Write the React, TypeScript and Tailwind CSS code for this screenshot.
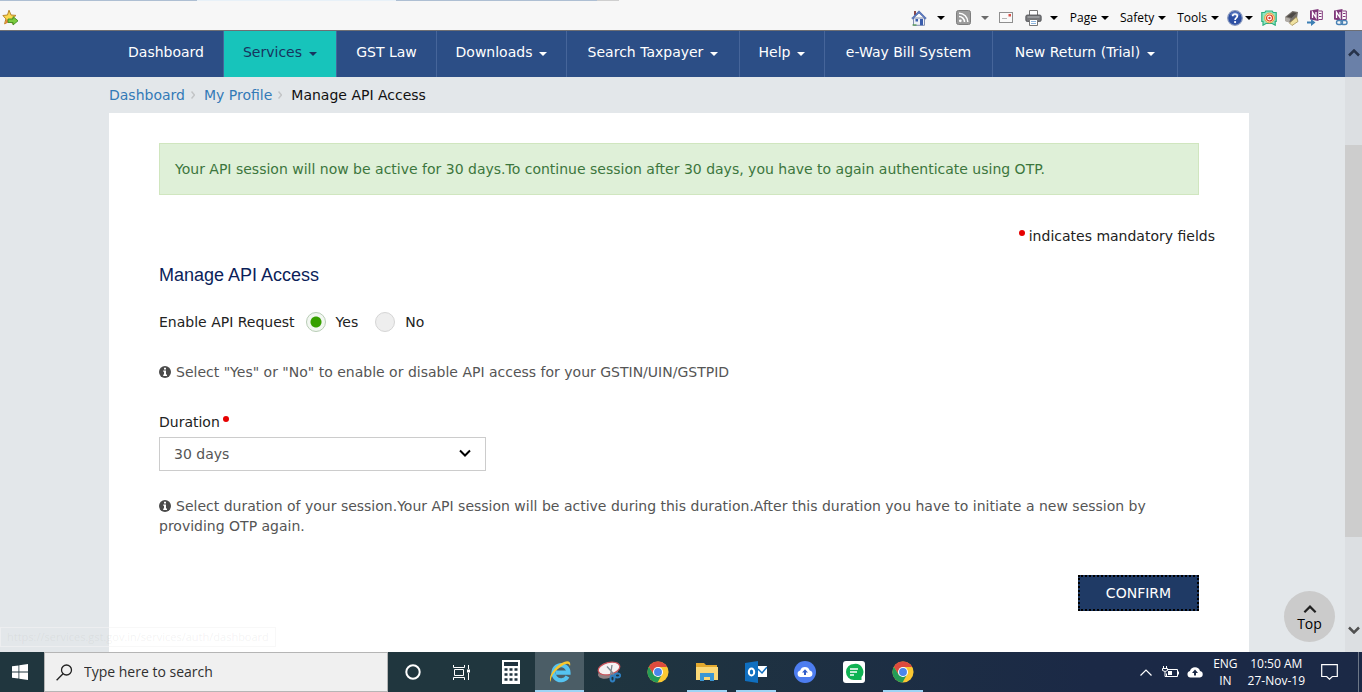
import React from "react";

const Caret = ({ className = "" }: { className?: string }) => (
  <svg viewBox="0 0 8 4" className={`h-1 w-2 shrink-0 fill-current ${className}`} aria-hidden="true">
    <path d="M0 0h8L4 4z" />
  </svg>
);

const StarIcon = () => (
  <svg viewBox="0 0 18 18" className="h-[18px] w-[18px]" aria-hidden="true">
    <path d="M7 1.2 9 6l5 .4-3.8 3.4 1.2 5L7 12.2l-4.4 2.7 1.3-5L.9 6.500 5.500 6z" fill="#fcd94e" stroke="#b8862b" strokeWidth="1" />
    <path d="M3 15.200 4.600 10 7 12.300z" fill="#e8823a" />
    <path d="M6 10h5V7.600l5 4.200-5 4.200v-2.500H6z" fill="#7ccb3f" stroke="#3f8d22" strokeWidth=".9" />
  </svg>
);

const HomeIcon = () => (
  <svg viewBox="0 0 16 16" className="h-4 w-4" aria-hidden="true">
    <path d="M3 1h2v4H3z" fill="#8d4a4a" />
    <path d="M2.500 8h11v7.300h-11z" fill="#eef1f8" stroke="#6476a0" strokeWidth=".8" />
    <path d="M8 .8.700 8.200l1 .8L8 3l6.300 6 1-.8z" fill="#5c7cc4" stroke="#3b559a" strokeWidth=".6" />
    <path d="M4.500 9h2.500v2.500H4.500zM9 9h3v6.300H9z" fill="#3a5dad" />
    <path d="M1.500 15h4" stroke="#4f9a4a" strokeWidth="1.200" />
  </svg>
);

const RssIcon = () => (
  <svg viewBox="0 0 15 15" className="h-[15px] w-[15px]" aria-hidden="true">
    <rect x=".5" y=".5" width="14" height="14" rx="2" fill="#9b9b9b" stroke="#7e7e7e" />
    <circle cx="4.300" cy="10.800" r="1.400" fill="#fff" />
    <path d="M3 6.500a5.500 5.500 0 0 1 5.500 5.500M3 3.200a8.800 8.800 0 0 1 8.800 8.800" fill="none" stroke="#fff" strokeWidth="1.500" />
  </svg>
);

const MailIcon = () => (
  <svg viewBox="0 0 14 11" className="h-[11px] w-[14px]" aria-hidden="true">
    <rect x=".5" y=".5" width="13" height="10" fill="#fafafa" stroke="#8f8f8f" />
    <path d="M9.500 2h2.500v2.500H9.500z" fill="#d9534a" />
    <path d="M3 6.500h5" stroke="#b5b5b5" />
  </svg>
);

const PrinterIcon = () => (
  <svg viewBox="0 0 17 16" className="h-4 w-[17px]" aria-hidden="true">
    <path d="M4.500.500h8V6h-8z" fill="#fff" stroke="#777" />
    <rect x=".8" y="5" width="15.400" height="6.500" rx="1.500" fill="#77787b" stroke="#4b4c50" strokeWidth=".8" />
    <path d="M2.500 7h12" stroke="#b9babd" />
    <path d="M4.500 9.500h8v6h-8z" fill="#fff" stroke="#777" />
    <path d="M6 11.500h5M6 13.500h5" stroke="#8cb4dd" />
  </svg>
);

const HelpIcon = () => (
  <svg viewBox="0 0 16 16" className="h-4 w-4" aria-hidden="true">
    <circle cx="8" cy="8" r="7.300" fill="#2c4fa3" stroke="#8a9abf" strokeWidth="1.200" />
    <path d="M3 5a5.600 5.600 0 0 1 10 0q-5 2.500-10 0z" fill="#7f9bd8" opacity=".6" />
    <path d="M5.700 6.300c0-3 4.700-3 4.700-.2C10.400 8 8.100 7.900 8.100 10" fill="none" stroke="#fff" strokeWidth="1.700" />
    <circle cx="8.100" cy="12.100" r="1.100" fill="#fff" />
  </svg>
);

const TargetIcon = () => (
  <svg viewBox="0 0 16 16" className="h-4 w-4" aria-hidden="true">
    <path d="M.8 2.500h3l1-1.500h6.400l1 1.500h3v9h-1v3.700l-3-1.700H5l-3 1.700v-3.700H.8z" fill="#8fe6c2" stroke="#2fb07f" strokeWidth="1.200" />
    <circle cx="8.500" cy="8" r="4.900" fill="#fbe9a4" stroke="#ee9a48" strokeWidth="1" />
    <circle cx="8.500" cy="8" r="3" fill="#fff" stroke="#dd3e31" strokeWidth="1.200" />
    <circle cx="8.500" cy="8" r="1.200" fill="#dd3e31" />
  </svg>
);

const ScannerIcon = () => (
  <svg viewBox="0 0 16 16" className="h-4 w-4" aria-hidden="true">
    <path d="M1 7 8.500 1l5.500 1L13 8l-5 5.500L1.500 11z" fill="#77726c" />
    <path d="M3 6.500 9 2.300l3.500.700L7.500 8z" fill="#4d4945" />
    <path d="m5.500 13 7-6 1.500 4.500L8 15.500z" fill="#f0e2a2" stroke="#9b8849" strokeWidth=".7" />
    <path d="m1 7 5.500 1.800L5 12.500 1 11z" fill="#b1aca6" />
  </svg>
);

const NoteIcon = ({ linked = false }: { linked?: boolean }) => (
  <svg viewBox="0 0 17 17" className="h-[17px] w-[17px]" aria-hidden="true">
    <path d="M3 1.500 11.500 0v12L3 10.500z" fill="#80397b" />
    <path d="M11.500 2h3.800v8.500h-3.800" fill="#fff" stroke="#80397b" />
    <path d="M12 4.500h2.500M12 7.500h2.500" stroke="#80397b" />
    <path d="M5.500 9V3.200L9 8.500V3" fill="none" stroke="#fff" strokeWidth="1.300" />
    {linked ? (
      <g fill="none" stroke="#4b83b5" strokeWidth="1.400">
        <rect x="5.500" y="11.500" width="6" height="4" rx="2" />
        <rect x="10" y="11.500" width="6" height="4" rx="2" />
      </g>
    ) : (
      <path d="M0 12.500h4V10l4.500 3.500L4 17v-2.500H0z" fill="#3d7fb4" />
    )}
  </svg>
);

const tools = ["Page", "Safety", "Tools"];

const Toolbar = () => (
  <header className="border-b border-[#6f6f73] bg-[#f7f7f7] font-['Open_Sans',sans-serif] text-xs text-black">
    <div className="flex h-px">
      <div className="w-[197px] bg-[#aebfd3]" />
      <div className="w-[199px] bg-[#e8f1f8]" />
      <div className="w-[201px] bg-[#aebfd3]" />
      <div className="w-[22px] bg-[#cfcfcf]" />
      <div className="flex-1 bg-[#f7f7f7]" />
    </div>
    <div className="flex h-[29px] items-center pt-1 pr-3.5 pl-0.5">
      <button type="button" aria-label="Add to favorites"><StarIcon /></button>
      <div className="ml-auto flex items-center">
        <button type="button" aria-label="Home" className="flex items-center gap-2.5"><HomeIcon /><Caret /></button>
        <button type="button" aria-label="Feeds" className="ml-[11px] flex items-center gap-2.5 text-[#6b6b6b]"><RssIcon /><Caret /></button>
        <button type="button" aria-label="Read mail" className="ml-2.5"><MailIcon /></button>
        <button type="button" aria-label="Print" className="ml-3 flex items-center gap-2"><PrinterIcon /><Caret /></button>
        <div className="ml-3 flex gap-[11px]">
          {tools.map((t) => (
            <button key={t} type="button" className="flex items-center gap-1">{t}<Caret /></button>
          ))}
        </div>
        <button type="button" aria-label="Help" className="ml-2 flex items-center gap-0.5"><HelpIcon /><Caret /></button>
        <div className="ml-2 flex items-center gap-[7px]">
          <button type="button" aria-label="Network"><TargetIcon /></button>
          <button type="button" aria-label="Scanner"><ScannerIcon /></button>
          <button type="button" aria-label="Send to notes"><NoteIcon /></button>
          <button type="button" aria-label="Linked notes"><NoteIcon linked /></button>
        </div>
      </div>
    </div>
  </header>
);

const navItems = [
  { label: "Dashboard" },
  { label: "Services", menu: true, active: true },
  { label: "GST Law" },
  { label: "Downloads", menu: true },
  { label: "Search Taxpayer", menu: true },
  { label: "Help", menu: true },
  { label: "e-Way Bill System" },
  { label: "New Return (Trial)", menu: true },
];

const Nav = () => (
  <nav className="bg-[#2c4e86] pr-1">
    <ul className="mx-auto grid max-w-[1140px] grid-cols-[115px_113px_100px_130px_173px_85px_168px_185px]">
      {navItems.map((n) => (
        <li key={n.label} className="border-r border-[#46659a]">
          <a
            href="#"
            className={`flex h-[46px] items-center justify-center pb-1 whitespace-nowrap ${n.active ? "bg-[#17c4bb] text-[#17345f]" : "text-white"}`}
          >
            {n.label}
            {n.menu && <Caret className="mt-1 ml-[7px]" />}
          </a>
        </li>
      ))}
    </ul>
  </nav>
);

const Required = () => <span className="mt-1 block h-1.5 w-1.5 shrink-0 rounded-full bg-[#e60000]" aria-hidden="true" />;

const InfoIcon = () => (
  <svg viewBox="0 0 12 12" className="mr-[5px] mb-0.5 inline h-3 w-3" aria-hidden="true">
    <circle cx="6" cy="6" r="6" fill="#4a4a4a" />
    <path d="M5 1.800h2v1.700H5zM4.200 4.600H7v4h1v1.300H4.200V8.600H5V5.800h-.8z" fill="#fff" />
  </svg>
);

const Chevron = ({ className, width = 2 }: { className: string; width?: number }) => (
  <svg viewBox="0 0 12 8" className={className} fill="none" stroke="currentColor" strokeWidth={width} aria-hidden="true">
    <path d="m1 1.500 5 5 5-5" />
  </svg>
);

const Separator = () => (
  <svg viewBox="0 0 4 8" className="mr-[9px] ml-1.5 h-2 w-1" fill="none" stroke="#c2c4c6" strokeWidth="1.500" aria-hidden="true">
    <path d="m.5.5 3 3.500-3 3.500" />
  </svg>
);

const radioClass =
  "h-5 w-5 appearance-none rounded-full border border-[#d5d5d5] bg-[#eeeeee] checked:border-[#b9cdb6] checked:bg-[radial-gradient(circle,#37a000_5px,#f2f7f1_6px)]";

const Main = () => (
  <main className="pr-1">
    <div className="mx-auto max-w-[1140px]">
      <ol className="flex h-9 items-center text-[#337ab7]">
        <li className="flex items-center"><a href="#">Dashboard</a><Separator /></li>
        <li className="flex items-center"><a href="#">My Profile</a><Separator /></li>
        <li className="text-[#111]">Manage API Access</li>
      </ol>
    </div>
    <form className="mx-auto min-h-[539px] max-w-[1140px] bg-white px-[50px] pt-[30px]" onSubmit={(e) => e.preventDefault()}>
      <p className="border border-[#d0e6bf] bg-[#dff0d8] px-[15px] py-[15px] text-[#3c763d]" role="status">
        Your API session will now be active for 30 days.To continue session after 30 days, you have to again authenticate using OTP.
      </p>
      <p className="-mr-4 mt-[31px] flex justify-end gap-1 text-[#222]"><Required />indicates mandatory fields</p>
      <h1 className="mt-[17px] font-['Liberation_Sans',sans-serif] text-lg leading-6 text-[#0b1e59]">Manage API Access</h1>
      <fieldset className="mt-[25px] flex items-center text-[#222]">
        <legend className="float-left mr-[11px]">Enable API Request</legend>
        <label className="flex items-center gap-2.5"><input type="radio" name="api" className={radioClass} defaultChecked />Yes</label>
        <label className="ml-[17px] flex items-center gap-2.5"><input type="radio" name="api" className={radioClass} />No</label>
      </fieldset>
      <p className="mt-[30px] text-[#555]"><InfoIcon />Select "Yes" or "No" to enable or disable API access for your GSTIN/UIN/GSTPID</p>
      <label htmlFor="duration" className="mt-[30px] flex gap-[3px] text-[#222]">Duration<Required /></label>
      <div className="relative mt-[5px] w-[327px] max-w-full">
        <select id="duration" className="h-[34px] w-full appearance-none border border-[#ccc] bg-white px-3.5 text-[#555]">
          <option>30 days</option>
        </select>
        <Chevron className="pointer-events-none absolute top-3 right-[15px] h-2 w-3 text-black" />
      </div>
      <p className="mt-[25px] text-[#555]">
        <InfoIcon />Select duration of your session.Your API session will be active during this duration.After this duration you have to initiate a new session by providing OTP again.
      </p>
      <div className="mt-[39px] flex justify-end">
        <button type="submit" className="h-9 w-[121px] border-2 border-dotted border-black bg-[#1f3a65] text-white">CONFIRM</button>
      </div>
    </form>
  </main>
);

const Scrollbar = () => (
  <div className="absolute inset-y-0 right-0 flex w-[17px] flex-col bg-[#dcdfe2]" aria-hidden="true">
    <div className="flex h-[46px] items-center justify-center bg-[#6a80a8]"><Chevron className="mb-0.5 h-2 w-3 rotate-180 text-[#26324a]" width={2.500} /></div>
    <div className="mt-[68px] flex-[392] bg-[#cdcdcd]" />
    <div className="flex flex-[115] items-end justify-center"><Chevron className="mb-[18px] h-2 w-3 text-[#505050]" width={2.500} /></div>
  </div>
);

const ChromeIcon = () => (
  <svg viewBox="0 0 24 24" className="h-[22px] w-[22px]" aria-hidden="true">
    <circle cx="12" cy="12" r="11.500" fill="#fbc832" />
    <path d="M2 6.300A11.500 11.500 0 0 1 22 6.500H12L7.200 14.700z" fill="#dd4b3e" />
    <path d="M2 6.300A11.500 11.500 0 0 0 11.500 23.500l4.800-8.800L12 17l-4.800-2.300z" fill="#249c57" />
    <circle cx="12" cy="12" r="5.500" fill="#fff" />
    <circle cx="12" cy="12" r="4.300" fill="#4a86ea" />
  </svg>
);

const CortanaIcon = () => (
  <svg viewBox="0 0 16 16" className="h-4 w-4" aria-hidden="true"><circle cx="8" cy="8" r="6.700" fill="none" stroke="#fff" strokeWidth="2" /></svg>
);

const TaskViewIcon = () => (
  <svg viewBox="0 0 17 17" className="h-[17px] w-[17px]" fill="none" stroke="#fff" aria-hidden="true">
    <path d="M.500 1v2.500h11V1M.500 16v-2.500h11V16M1.500 5.500v6h9v-6zM15.500 1v4M15.500 9v7" />
    <path d="M14 5.500h3v3h-3z" fill="#fff" stroke="none" />
  </svg>
);

const CalculatorIcon = () => (
  <svg viewBox="0 0 18 24" className="h-6 w-[18px]" aria-hidden="true">
    <path d="M0 0h18v24H0z" fill="#fff" />
    <path d="M2 2h14v4H2z" fill="#20333f" />
    <path d="M2.500 9.500h13M2.500 14.500h13M2.500 19.500h13" stroke="#20333f" strokeWidth="2.500" strokeDasharray="3 2" />
  </svg>
);

const IeIcon = () => (
  <svg viewBox="0 0 24 24" className="h-6 w-6" aria-hidden="true">
    <path d="M19.500 16.500a7.500 7.500 0 1 1 1-3.800H8" fill="none" stroke="#55c3f1" strokeWidth="4.200" />
    <path d="M3 22C-1 18 7 5 16 2c5-2 7 0 6 4-1-3-4-3-8 0C7 10 2 17 3 22z" fill="#f8c62e" />
  </svg>
);

const SnippingIcon = () => (
  <svg viewBox="0 0 24 22" className="h-[22px] w-6" aria-hidden="true">
    <ellipse cx="11" cy="11.500" rx="10.500" ry="5.500" fill="#8f8184" transform="rotate(-18 11 11)" />
    <ellipse cx="12" cy="7.500" rx="11" ry="6" fill="#f5f1f2" stroke="#c9525a" strokeWidth="1.200" transform="rotate(-14 12 7.500)" />
    <path d="M10 5.500 18.500 15M15 4l-1.500 10" stroke="#7d8790" strokeWidth="1.300" />
    <g fill="none" stroke="#2f7fc0" strokeWidth="1.900"><ellipse cx="15.500" cy="17.500" rx="2" ry="3" /><ellipse cx="20.500" cy="14.500" rx="2.700" ry="2" /></g>
  </svg>
);

const FolderIcon = () => (
  <svg viewBox="0 0 22 20" className="h-5 w-[22px]" aria-hidden="true">
    <path d="M0 1h8l2 2h11v5H0z" fill="#e3a92f" />
    <path d="M0 5h22v13H0z" fill="#fbd877" />
    <path d="M4 11h14v8h-4v-4H8v4H4z" fill="#3b97d3" />
  </svg>
);

const OutlookIcon = () => (
  <svg viewBox="0 0 22 22" className="h-[22px] w-[22px]" aria-hidden="true">
    <path d="M0 2 13 0v22L0 20z" fill="#0f6fc0" />
    <path d="M13 5h9v11h-9z" fill="#fff" />
    <path d="m13 8 4 4 5-6" fill="none" stroke="#0f6fc0" strokeWidth="1.500" />
    <ellipse cx="6.500" cy="11" rx="2.700" ry="3.500" fill="none" stroke="#fff" strokeWidth="2" />
  </svg>
);

const BackupIcon = () => (
  <svg viewBox="0 0 22 22" className="h-[22px] w-[22px]" aria-hidden="true">
    <circle cx="11" cy="11" r="11" fill="#4d7df0" />
    <path d="M6.500 16a3.300 3.300 0 0 1-.3-6.500 5 5 0 0 1 9.500 0 3.300 3.300 0 0 1 0 6.500z" fill="#fff" />
    <path d="M11 8.200 14 11.500h-2V14h-2v-2.500H8z" fill="#315dc9" />
  </svg>
);

const ChatIcon = () => (
  <svg viewBox="0 0 22 22" className="h-[22px] w-[22px]" aria-hidden="true">
    <rect width="22" height="22" rx="3" fill="#fff" />
    <path d="M11 3a8 8 0 1 0 0 16h7.500v-3A8 8 0 0 0 11 3z" fill="#0fb253" />
    <path d="M7 8h8M7 11h7M7 14h4" stroke="#fff" strokeWidth="1.600" />
  </svg>
);

const apps = [
  { name: "Cortana", icon: <CortanaIcon /> },
  { name: "Task View", icon: <TaskViewIcon /> },
  { name: "Calculator", icon: <CalculatorIcon /> },
  { name: "Internet Explorer", icon: <IeIcon />, open: true, focused: true },
  { name: "Snipping Tool", icon: <SnippingIcon /> },
  { name: "Chrome", icon: <ChromeIcon /> },
  { name: "File Explorer", icon: <FolderIcon />, open: true },
  { name: "Outlook", icon: <OutlookIcon />, open: true },
  { name: "Backup", icon: <BackupIcon /> },
  { name: "Chat", icon: <ChatIcon /> },
  { name: "Chrome profile", icon: <ChromeIcon />, open: true },
];

const Taskbar = () => (
  <footer className="flex h-10 shrink-0 bg-linear-to-r from-[#20363e] from-40% to-[#1b2946] to-80% font-['Open_Sans',sans-serif] text-white">
    <button type="button" aria-label="Start" className="flex w-11 shrink-0 items-center justify-center pr-1">
      <svg viewBox="0 0 16 16" className="h-4 w-4 fill-white" aria-hidden="true">
        <path d="M0 2.300 6.500 1.400v6.200H0zM7.300 1.300 16 0v7.600H7.300zM0 8.400h6.500v6.200L0 13.700zM7.300 8.400H16V16l-8.700-1.300z" />
      </svg>
    </button>
    <label className="flex w-[344px] shrink items-center gap-[11px] border border-[#b5b5b5] bg-[#f0f0f0] pl-[11px]">
      <svg viewBox="0 0 17 17" className="h-[17px] w-[17px] shrink-0" fill="none" stroke="#222" strokeWidth="1.300" aria-hidden="true">
        <circle cx="10.500" cy="6" r="5" /><path d="M7 9.700.600 16.300" />
      </svg>
      <input type="search" aria-label="Search" placeholder="Type here to search" className="w-full min-w-0 bg-transparent text-sm outline-none placeholder:text-[#2f2f2f]" />
    </label>
    <div className="flex">
      {apps.map((a) => (
        <button key={a.name} type="button" aria-label={a.name} className={`flex w-[49px] flex-col items-center ${a.focused ? "bg-[#4b5d66]" : ""}`}>
          <span className="flex flex-1 items-center">{a.icon}</span>
          <span className={`-mt-0.5 h-0.5 ${a.focused ? "w-full" : "w-10"} ${a.open ? "bg-[#9fd4f5]" : ""}`} />
        </button>
      ))}
    </div>
    <div className="ml-auto flex items-center text-xs">
      <svg viewBox="0 0 12 7" className="h-[7px] w-3" fill="none" stroke="#fff" strokeWidth="1.200" aria-hidden="true"><path d="m.5 6.500 5.500-5.500 5.500 5.500" /></svg>
      <svg viewBox="0 0 17 12" className="ml-2.5 h-3 w-[17px]" fill="none" stroke="#fff" aria-hidden="true">
        <path d="M6 3.500h9.500v7H4.500v-3M1.500 0v2.500M4.500 0v2.500M.500 2.500h5v2q-2.500 2-5 0zM3 5.500v5h2M16.500 5.500v3" />
        <path d="M6 5h4v4H6z" fill="#fff" stroke="none" />
      </svg>
      <svg viewBox="0 0 16 12" className="ml-2 h-3 w-4" aria-hidden="true">
        <path d="M3.500 11.500a3.300 3.300 0 0 1-.5-6.500 5.200 5.200 0 0 1 10 0 3.300 3.300 0 0 1 0 6.500z" fill="#fff" />
        <path d="M8 3.500 11 7H9v2.500H7V7H5z" fill="#1b2946" />
      </svg>
      <p className="ml-2.5 text-center leading-[17px]">ENG<br />IN</p>
      <p className="ml-2.5 text-center leading-[17px]">10:50 AM<br />27-Nov-19</p>
      <svg viewBox="0 0 17 16" className="ml-4 h-4 w-[17px]" fill="none" stroke="#fff" strokeWidth="1.200" aria-hidden="true">
        <path d="M.700.700h15.600v11.800h-5L8.500 15.200l-2.800-2.700h-5z" />
      </svg>
      <span className="ml-5 h-10 w-1 border-l border-[#6d7787]" />
    </div>
  </footer>
);

export default function App() {
  return (
    <div className="flex min-h-screen flex-col bg-[#e3e7ea] font-['DejaVu_Sans',sans-serif] text-sm leading-5">
      <Toolbar />
      <div className="relative flex-1">
        <Nav />
        <Main />
        <Scrollbar />
        <a href="#" className="absolute right-[27px] bottom-2.5 flex h-[51px] w-[51px] flex-col items-center rounded-full bg-[#cbcbcb] pt-3.5 font-['Open_Sans',sans-serif] text-black">
          <Chevron className="h-[9px] w-4 shrink-0 rotate-180 text-[#222]" />Top
        </a>
        <div className="absolute bottom-[5px] left-0 border border-[#f3f3f3]/60 px-1.5 font-['Open_Sans',sans-serif] text-[11px] leading-[18px] text-[#888]/10">
          https://services.gst.gov.in/services/auth/dashboard
        </div>
      </div>
      <Taskbar />
    </div>
  );
}
